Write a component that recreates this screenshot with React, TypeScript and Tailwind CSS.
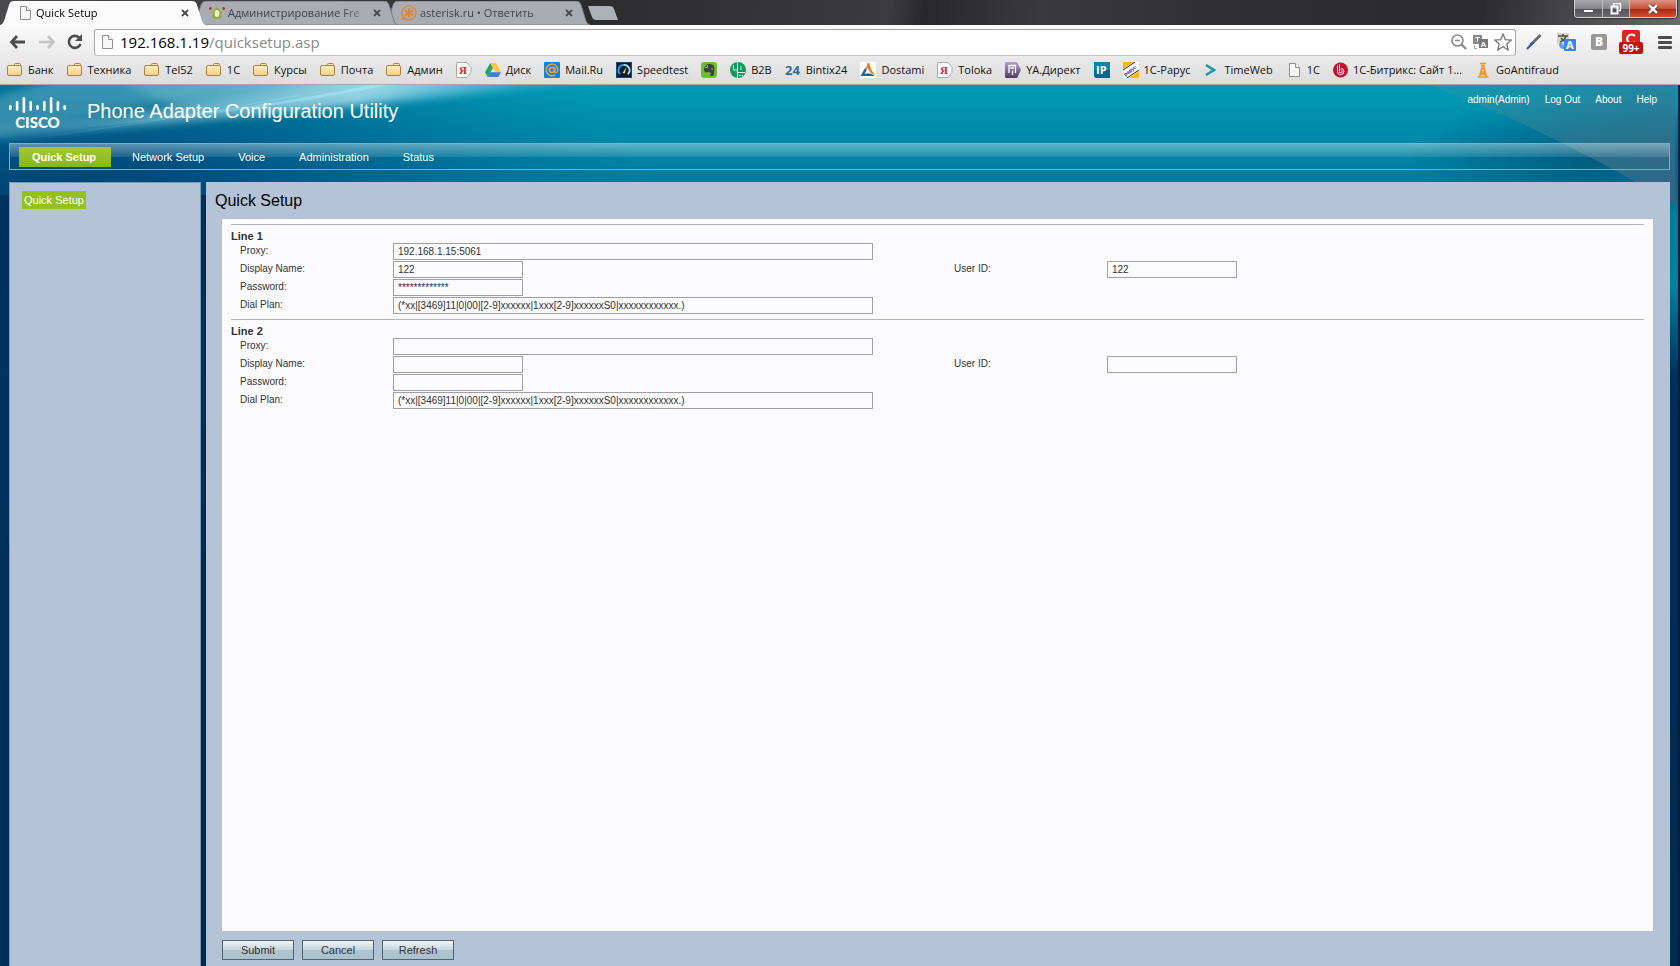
import type { ReactNode } from "react";

const FolderIcon = () => (
  <svg width="16" height="16" viewBox="0 0 16 16">
    <defs>
      <linearGradient id="folder" x1="0" y1="0" x2="0" y2="1">
        <stop offset="0" stopColor="#fff0c4" />
        <stop offset="1" stopColor="#f8cd80" />
      </linearGradient>
    </defs>
    <path d="M7.5 4V2.5q0-1 1-1h4q1 0 1 1V5z" fill="#fbe6b0" stroke="#a98147" />
    <rect x="0.5" y="3.5" width="14" height="10" rx="1.5" fill="url(#folder)" stroke="#a98147" />
  </svg>
);

const PageIcon = () => (
  <svg width="16" height="16" viewBox="0 0 16 16">
    <path d="M3.5 1.5h6l4 4v9h-10z" fill="#f6f6f6" stroke="#8e8e8e" />
    <path d="M9.5 1.5v4h4" fill="#fff" stroke="#8e8e8e" />
  </svg>
);

const YandexIcon = () => (
  <svg width="16" height="16" viewBox="0 0 16 16">
    <path d="M1 .5h10l4 5v5l-4 5H1q-.5 0-.5-.5V1q0-.5.5-.5z" fill="#fff" stroke="#a9a9a9" />
    <text x="3" y="12" fontSize="11" fontFamily="Liberation Serif" fontWeight="bold" fill="#d22">Я</text>
  </svg>
);

const DriveIcon = () => (
  <svg width="16" height="16" viewBox="0 0 16 16">
    <path d="M5.3 1 8 5.7 2.8 15 0 10.2z" fill="#23a566" />
    <path d="M5.3 1h5.4L16 10.2h-5.4z" fill="#fbc934" />
    <path d="M5.5 10.2H16L13.3 15H2.8z" fill="#3d7de8" />
  </svg>
);

const MailIcon = () => (
  <svg width="16" height="16" viewBox="0 0 16 16">
    <rect width="16" height="16" rx="1" fill="#1583d8" />
    <circle cx="8" cy="8" r="2.5" fill="none" stroke="#f5a623" strokeWidth="1.6" />
    <path d="M10.7 5.3v3.9c0 2 3.1 1.6 3.1-1.3A5.8 5.8 0 1 0 11 12.9" fill="none" stroke="#f5a623" strokeWidth="1.5" />
  </svg>
);

const SpeedtestIcon = () => (
  <svg width="16" height="16" viewBox="0 0 16 16">
    <rect x="0.5" y="0.5" width="15" height="15" fill="#0c1d33" stroke="#1e4670" />
    <path d="M4.2 12A5.3 5.3 0 0 1 8 2.8" fill="none" stroke="#25a7e0" strokeWidth="1.8" />
    <path d="M8 2.8A5.3 5.3 0 0 1 11.8 12" fill="none" stroke="#aee3f7" strokeWidth="1.8" />
    <path d="m6.5 11 4-6-1.8 6.6z" fill="#f4d25a" />
  </svg>
);

const EvernoteIcon = () => (
  <svg width="16" height="16" viewBox="0 0 16 16">
    <rect width="16" height="16" rx="3" fill="#6cc12e" />
    <path d="M3 5.5 6.3 2h3l3.2 1 1 4-.5 6-1.5 1H9.5l-.7-1.5 1.7-1L8 10l-3.5.5L3 8.5z" fill="#3c4440" />
    <path d="M3.8 5.6h2.7V3" fill="none" stroke="#8fd25c" />
    <path d="M10.3 7q1.5-.8 1.7.6" fill="none" stroke="#8fd25c" />
  </svg>
);

const B2BIcon = () => (
  <svg width="16" height="16" viewBox="0 0 16 16">
    <circle cx="8" cy="8" r="8" fill="#109a5b" />
    <path d="M7.5 0v16M3.5 3v5h4M7.5 10.5H15M11 4v4" fill="none" stroke="#e3f4ea" />
    <path d="M9 13.500h1.500M11.500 13.500H13" stroke="#e3f4ea" />
  </svg>
);

const Bintix24Icon = () => (
  <svg width="16" height="16" viewBox="0 0 16 16">
    <text x="0" y="13" fontSize="13" fontFamily="Open Sans" fontWeight="bold" fill="#2d6ea3">24</text>
  </svg>
);

const DostamiIcon = () => (
  <svg width="16" height="16" viewBox="0 0 16 16">
    <rect width="16" height="16" fill="#fff" />
    <path d="M4.5 7Q7 5 7.500 1h2q1 7 5.500 12-5-1-7-6.500z" fill="#f07c25" />
    <path d="M4.500 7 7 6.500Q6.500 9 4.500 12q5-2 10.500 2H.5z" fill="#1e63a8" />
  </svg>
);

const DirectIcon = () => (
  <svg width="16" height="16" viewBox="0 0 16 16">
    <defs>
      <linearGradient id="direct" x1="0" y1="0" x2="0" y2="1">
        <stop offset="0" stopColor="#b3a2cf" />
        <stop offset="1" stopColor="#4d3b6b" />
      </linearGradient>
    </defs>
    <path d="M0 1q0-1 1-1h11l4 8-4 8H1q-1 0-1-1z" fill="url(#direct)" />
    <path d="M4 11V3.500h6.500V11M5.500 6H9M7.500 8.500V13" fill="none" stroke="#fff" strokeWidth="1.3" />
  </svg>
);

const IpIcon = () => (
  <svg width="16" height="16" viewBox="0 0 16 16">
    <path d="M0 0h16v16H2l-2-2z" fill="#0a84ad" />
    <path d="M0 8h16v8H2l-2-2z" fill="#07658f" />
    <text x="2" y="12" fontSize="11" fontFamily="Open Sans" fontWeight="bold" fill="#fff">IP</text>
  </svg>
);

const ParusIcon = () => (
  <svg width="16" height="16" viewBox="0 0 16 16">
    <rect width="16" height="16" fill="#fff" />
    <path d="M0 0h11L0 7zM16 9v7H6z" fill="#fbb70d" />
    <path d="M0 8 12 0M4 16l12-8" stroke="#222" />
    <text transform="translate(8 10) rotate(-36)" textAnchor="middle" fontSize="5" fontFamily="Liberation Sans" fontWeight="bold" fill="#1c2fae">рарус</text>
  </svg>
);

const TimeWebIcon = () => (
  <svg width="16" height="16" viewBox="0 0 16 16">
    <path d="m2 3 8 5-8 5" fill="none" stroke="#119aa8" strokeWidth="2.5" />
  </svg>
);

const BitrixIcon = () => (
  <svg width="15" height="16" viewBox="0 0 15 16">
    <circle cx="7.5" cy="8" r="7.5" fill="#c8102e" />
    <path d="M4.5 3.5v6a3.2 3.2 0 1 0 3.2-3.2M6.500 2.500v7a1.300 1.300 0 1 0 1.300-1.300" fill="none" stroke="#fff" />
  </svg>
);

const TowerIcon = () => (
  <svg width="16" height="16" viewBox="0 0 16 16">
    <path d="M5 1.5h6M6 3.500h4M7.500 3 4.500 15M8.500 3l3 12M6.500 7h3M5.800 10h4.500M2.500 15h11M6 13l4-3M10 13 6 10" fill="none" stroke="#f0962c" strokeWidth="1.5" />
  </svg>
);

const FrogIcon = () => (
  <svg width="16" height="16" viewBox="0 0 16 16">
    <path d="M0 3.500h2.500M1.500 2v3M16 3.500h-2.500M14.500 2v3" fill="none" stroke="#a83228" strokeWidth="1.5" />
    <path d="M2 5q2 2.500 3.500 2V4L7 2.500h2L10.500 4v3q1.500.5 3.500-2l-2 4.500 1 3-2 1H5l-2-1 1-3z" fill="#8fae28" />
    <ellipse cx="8" cy="8.5" rx="2.300" ry="3.500" fill="#eef2dc" />
  </svg>
);

const AsteriskIcon = () => (
  <svg width="16" height="16" viewBox="0 0 16 16">
    <path d="M1 14.5 3 13A7 7 0 1 1 8 15q-2.500 0-4-1.500z" fill="none" stroke="#dd8433" strokeWidth="1.3" />
    <path d="M8 3.500v9M4 5.700l8 4.600M12 5.700l-8 4.600" stroke="#dd8433" strokeWidth="2" />
  </svg>
);

const CloseIcon = () => (
  <svg width="8" height="8" viewBox="0 0 8 8">
    <path d="m1 1 6 6M7 1 1 7" stroke="#4a4a4a" strokeWidth="1.8" />
  </svg>
);

const tabs = [
  { title: "Quick Setup", icon: <PageIcon />, active: true, box: "z-30 text-black" },
  { title: "Администрирование Fre", icon: <FrogIcon />, active: false, box: "-ml-[14px] z-20 text-[#3f434a]" },
  { title: "asterisk.ru • Ответить", icon: <AsteriskIcon />, active: false, box: "-ml-[14px] z-10 text-[#3f434a]" },
];

const TabStrip = () => (
  <div className="relative flex h-[25px] items-end overflow-hidden bg-[linear-gradient(100deg,#4a4a4d_0%,#2c2c30_35%,#3b3b3f_53%,#28282c_55%,#3a3a3e_62%,#2e2e31_75%,#2b2b2e_88%,#6a6a6a_100%)]">
    {tabs.map((tab) => (
      <div key={tab.title} className={"relative flex h-6 w-[206px] shrink-0 items-center pl-[17px] " + tab.box}>
        <svg className="absolute inset-0 h-full w-full" viewBox="0 0 206 24" preserveAspectRatio="none">
          <path
            d="M0 24q3-1 4-4L9 4q1-4 5-4h178q4 0 5 4l5 16q1 3 4 4z"
            fill={tab.active ? "#fbfbfb" : "#a9acb3"}
            stroke={tab.active ? "none" : "#7b7e85"}
          />
        </svg>
        <span className="relative">{tab.icon}</span>
        <span className="relative ml-[3px] w-[145px] whitespace-nowrap text-[11px] leading-4 [mask-image:linear-gradient(90deg,#000_80%,transparent)]">
          {tab.title}
        </span>
        <button className="relative" aria-label="Закрыть вкладку">
          <CloseIcon />
        </button>
      </div>
    ))}
    <button className="mb-[5px] -ml-[3px] h-[14px] w-[31px]" aria-label="Новая вкладка">
      <svg width="31" height="14" viewBox="0 0 31 14">
        <path d="M1 0h22q3 0 4 3l4 11H9q-3 0-4-3z" fill="#adb0b6" />
      </svg>
    </button>
    <div className="mr-[3px] ml-auto flex h-[18px] self-start overflow-hidden rounded-b-[4px] border border-t-0 border-[#d5d5d5] shadow-[0_0_1px_1px_#333]">
      <button aria-label="Свернуть" className="flex w-7 items-center justify-center border-r border-[#bbb] bg-[linear-gradient(#a8a8aa,#858588_50%,#505054_51%,#6a6a6e)]">
        <span className="mt-1 h-[4px] w-[11px] border border-[#555] bg-white" />
      </button>
      <button aria-label="Развернуть" className="flex w-[27px] items-center justify-center border-r border-[#bbb] bg-[linear-gradient(#a8a8aa,#858588_50%,#505054_51%,#6a6a6e)]">
        <svg width="12" height="12" viewBox="0 0 12 12" fill="none" stroke="#fff">
          <path d="M3.5 2.500v-2h7v7h-2" strokeWidth="1.3" />
          <rect x="1.5" y="3.5" width="6" height="7" strokeWidth="2" />
        </svg>
      </button>
      <button aria-label="Закрыть" className="flex w-[46px] items-center justify-center bg-[linear-gradient(#dc9483,#c8513a_50%,#a92711_51%,#c9502f)]">
        <svg width="12" height="10" viewBox="0 0 12 10">
          <path d="m2 1 8 8M10 1 2 9" stroke="#5d1c12" strokeWidth="4" />
          <path d="m2 1 8 8M10 1 2 9" stroke="#fff" strokeWidth="2.5" />
        </svg>
      </button>
    </div>
  </div>
);

const Toolbar = () => (
  <div className="flex h-[34px] items-center pr-2 pl-[9px]">
    <button aria-label="Назад">
      <svg width="18" height="16" viewBox="0 0 18 16" fill="none" stroke="#4d4d4d" strokeWidth="2.8">
        <path d="M2 8h14M8 2 2.500 8 8 14" />
      </svg>
    </button>
    <button aria-label="Вперёд" className="ml-3">
      <svg width="18" height="16" viewBox="0 0 18 16" fill="none" stroke="#c3c3c3" strokeWidth="2.6">
        <path d="M0 8h14M9 2l5.500 6L9 14" />
      </svg>
    </button>
    <button aria-label="Обновить" className="ml-[10px]">
      <svg width="16" height="16" viewBox="0 0 16 16">
        <path d="M13.5 10A6 6 0 1 1 12 3.500" fill="none" stroke="#4d4d4d" strokeWidth="2.6" />
        <path d="M15 0v7H8z" fill="#4d4d4d" />
      </svg>
    </button>
    <div className="ml-[11px] flex h-[27px] flex-1 items-center rounded-[3px] border border-[#a6a6a6] border-b-[#c4c4c4] bg-white pr-[3px] pl-1">
      <PageIcon />
      <div className="ml-[5px] flex-1 text-[15px] leading-5 text-[#8a8a8a]">
        <span className="text-black">192.168.1.19</span>/quicksetup.asp
      </div>
      <svg width="16" height="16" viewBox="0 0 16 16" fill="none" stroke="#8a8a8a">
        <circle cx="6.5" cy="6.5" r="5.5" strokeWidth="1.6" />
        <path d="M4 6.5h5" strokeWidth="1.6" />
        <path d="m10.5 10.5 4.5 4.5" strokeWidth="2.4" />
      </svg>
      <svg className="ml-[6px]" width="16" height="16" viewBox="0 0 16 16">
        <rect x="0" y="1" width="9" height="9" fill="#8a8a8a" />
        <path d="M2 3.500h5M4.500 3.500v4" stroke="#fff" />
        <rect x="6" y="5" width="9" height="9" fill="#777" />
        <text x="7.5" y="13" fontSize="8" fontFamily="Liberation Sans" fontWeight="bold" fill="#fff">A</text>
        <path d="M1.5 11.500v3h3" fill="none" stroke="#777" strokeDasharray="2 1" />
      </svg>
      <svg className="ml-[5px]" width="18" height="18" viewBox="0 0 18 18">
        <path d="m9 1 2.3 5.6 6 .5-4.500 4 1.400 5.900L9 13.800 3.800 17l1.400-5.900-4.500-4 6-.5z" fill="#fff" stroke="#777" strokeWidth="1.3" />
      </svg>
    </div>
    <button aria-label="Перо" className="ml-[10px]">
      <svg width="16" height="16" viewBox="0 0 16 16">
        <path d="M1 14q3-5 6-4-1 4-6 4z" fill="#b4cdfb" />
        <path d="M14.5 1 5 10.500" stroke="#666" strokeWidth="2.6" />
        <path d="M7 8.500 1 15" stroke="#2b55c9" strokeWidth="2" />
      </svg>
    </button>
    <button aria-label="Перевести" className="ml-[15px]">
      <svg width="20" height="20" viewBox="0 0 20 20">
        <rect x="0" y="1" width="12" height="11" fill="#d8d5c4" />
        <path d="M1 4h10M6 2v2M9 4q-1 4-6 6M4 6q2 3 6 4" fill="none" stroke="#4c4c46" strokeWidth="1.5" />
        <rect x="7" y="7" width="12" height="12" rx="1" fill="#3b82ee" />
        <path d="M2 12q0 5 5 5v-3l-3-4z" fill="#5c97f0" />
        <text x="9" y="17" fontSize="11" fontFamily="Open Sans" fontWeight="bold" fill="#fff">A</text>
      </svg>
    </button>
    <button aria-label="B" className="ml-[14px] flex size-4 items-center justify-center rounded-[2px] bg-[#989898] text-[12px] font-extrabold text-white">
      <span aria-hidden="true">B</span>
    </button>
    <button aria-label="Уведомления: 99+" className="relative ml-3 flex h-6 w-6 justify-center">
      <svg width="18" height="18" viewBox="0 0 18 18">
        <rect width="18" height="18" rx="2" fill="#d8281d" />
        <path d="M13 6A4.500 4.500 0 1 0 13 12" fill="none" stroke="#fff" strokeWidth="2.2" />
      </svg>
      <span className="absolute inset-x-0 bottom-0 h-3 rounded-[2px] bg-[#c4100e] text-center text-[10px] leading-3 font-bold text-white">99+</span>
    </button>
    <button aria-label="Меню" className="ml-[15px] flex w-[14px] flex-col gap-[2px]">
      <span className="h-[3px] w-full rounded-[1px] bg-[#4d4d4d]" />
      <span className="h-[3px] w-full rounded-[1px] bg-[#4d4d4d]" />
      <span className="h-[3px] w-full rounded-[1px] bg-[#4d4d4d]" />
    </button>
  </div>
);

const bookmarks: { icon: ReactNode; title?: string; name?: string }[] = [
  { icon: <FolderIcon />, title: "Банк" },
  { icon: <FolderIcon />, title: "Техника" },
  { icon: <FolderIcon />, title: "Tel52" },
  { icon: <FolderIcon />, title: "1C" },
  { icon: <FolderIcon />, title: "Курсы" },
  { icon: <FolderIcon />, title: "Почта" },
  { icon: <FolderIcon />, title: "Админ" },
  { icon: <YandexIcon />, name: "Яндекс" },
  { icon: <DriveIcon />, title: "Диск" },
  { icon: <MailIcon />, title: "Mail.Ru" },
  { icon: <SpeedtestIcon />, title: "Speedtest" },
  { icon: <EvernoteIcon />, name: "Evernote" },
  { icon: <B2BIcon />, title: "B2B" },
  { icon: <Bintix24Icon />, title: "Bintix24" },
  { icon: <DostamiIcon />, title: "Dostami" },
  { icon: <YandexIcon />, title: "Toloka" },
  { icon: <DirectIcon />, title: "YA.Директ" },
  { icon: <IpIcon />, name: "IP" },
  { icon: <ParusIcon />, title: "1С-Рарус" },
  { icon: <TimeWebIcon />, title: "TimeWeb" },
  { icon: <PageIcon />, title: "1C" },
  { icon: <BitrixIcon />, title: "1С-Битрикс: Сайт 1..." },
  { icon: <TowerIcon />, title: "GoAntifraud" },
];

const BookmarksBar = () => (
  <nav className="flex h-[26px] items-center gap-[13px] overflow-hidden border-b border-[#a5a9a9] pb-[3px] pl-[7px] text-[11px] leading-4 whitespace-nowrap text-[#111]">
    {bookmarks.map((b, i) => (
      <a key={i} href="#" aria-label={b.title ? undefined : b.name} className="flex shrink-0 items-center gap-[5px]">
        {b.icon}
        {b.title && <span>{b.title}</span>}
      </a>
    ))}
  </nav>
);

// Light rays across the banner, fading to navy down both page edges
const Backdrop = () => (
  <svg className="absolute inset-0 h-full w-full" viewBox="0 0 1680 881" preserveAspectRatio="none" aria-hidden="true">
    <defs>
      <linearGradient id="sea" x1="0" y1="0" x2="0" y2="1">
        <stop offset="0" stopColor="#009ab6" />
        <stop offset="0.08" stopColor="#0083a4" />
        <stop offset="0.12" stopColor="#007a9c" />
        <stop offset="0.23" stopColor="#007f9f" />
        <stop offset="0.33" stopColor="#002f58" />
        <stop offset="1" stopColor="#002a52" />
      </linearGradient>
      <radialGradient id="deep" gradientUnits="userSpaceOnUse" cx="60" cy="240" r="620" gradientTransform="translate(0 60) scale(1 0.5)">
        <stop offset="0" stopColor="#002f5a" />
        <stop offset="0.35" stopColor="#00487a" stopOpacity="0.9" />
        <stop offset="1" stopColor="#006b99" stopOpacity="0" />
      </radialGradient>
      <linearGradient id="ray" x1="0" y1="0" x2="1" y2="0">
        <stop offset="0" stopColor="#4fa5bd" stopOpacity="0.6" />
        <stop offset="0.55" stopColor="#9ad6e6" stopOpacity="0.95" />
        <stop offset="1" stopColor="#3cb4d2" stopOpacity="0" />
      </linearGradient>
      <linearGradient id="streak" x1="0" y1="0" x2="1" y2="0">
        <stop offset="0" stopColor="#8fd6ea" stopOpacity="0" />
        <stop offset="1" stopColor="#a5e4f5" stopOpacity="0.9" />
      </linearGradient>
      <linearGradient id="dusk" x1="0" y1="0" x2="1" y2="1">
        <stop offset="0" stopColor="#2f9aa9" stopOpacity="0.4" />
        <stop offset="1" stopColor="#3a5f80" stopOpacity="0.95" />
      </linearGradient>
      <radialGradient id="shade" cx="0.6" cy="0.5" r="0.5">
        <stop offset="0" stopColor="#00557a" stopOpacity="0.85" />
        <stop offset="1" stopColor="#00557a" stopOpacity="0" />
      </radialGradient>
      <filter id="soft"><feGaussianBlur stdDeviation="4" /></filter>
    </defs>
    <rect width="1680" height="881" fill="url(#sea)" />
    <rect width="700" height="881" fill="url(#deep)" />
    <rect y="110" width="9" height="771" fill="#002f5a" opacity="0.8" />
    <rect x="201" y="110" width="5" height="771" fill="#00294f" opacity="0.8" />
    <g filter="url(#soft)">
      <path d="M-10 46Q180 24 380-10h280Q330 24-10 54z" fill="url(#ray)" />
      <path d="M100-12h500Q330 14 170 20z" fill="url(#ray)" />
      <path d="M-10 50 300-8H60L-10 14z" fill="#5fb0c4" opacity="0.55" />
    </g>
    <path d="M90 42Q270 25 387 0h-16Q250 25 90 40z" fill="url(#streak)" />
    <path d="M-10 58Q150 40 300 10" fill="none" stroke="url(#streak)" opacity="0.4" />
    <ellipse cx="1560" cy="75" rx="190" ry="65" fill="url(#shade)" />
    <path d="M1430 0h245v120Q1560 50 1430 0z" fill="url(#dusk)" />
    <rect x="1678" width="2" height="881" fill="#021f3c" />
  </svg>
);

// Heights of the nine bars of the logo, left to right
const bars = [5, 10, 16, 10, 5, 10, 16, 10, 5];

const CiscoLogo = () => (
  <a href="#" className="mt-[2px] flex w-[57px] flex-col items-center text-white">
    <svg width="57" height="18" viewBox="0 0 57 18" aria-hidden="true">
      {bars.map((h, i) => (
        <rect key={i} x={i * 6.8} y={h === 5 ? 8 : h === 10 ? 4 : 0} width="2.6" height={h} rx="1.3" fill="#fff" />
      ))}
    </svg>
    <span className="font-['Lato',sans-serif] text-[15px] leading-[14px] font-black">CISCO</span>
  </a>
);

const menu = ["Voice", "Administration", "Status"];

const Field = ({ id, label, value, width }: { id: string; label: string; value: string; width: string }) => (
  <>
    <label htmlFor={id} className="pl-[9px] leading-4">{label}</label>
    <input
      id={id}
      type="text"
      defaultValue={value}
      className={"ml-[9px] h-[17px] border border-[#a0a0a3] bg-[#fbfbfe] px-1 text-[10px] leading-[15px] outline-none " + width}
    />
  </>
);

const Line = ({ n, proxy, user, password }: { n: number; proxy: string; user: string; password: string }) => (
  <fieldset className="h-[95px] border-t border-[#b6b2cd] pt-[5px]">
    <h2 className="text-[11px] leading-[13px] font-bold">Line {n}</h2>
    <div className="grid auto-rows-[18px] grid-cols-[153px_561px_153px_1fr] text-[10px]">
      <Field id={`proxy${n}`} label="Proxy:" value={proxy} width="w-[480px]" />
      <div className="col-span-2" />
      <Field id={`name${n}`} label="Display Name:" value={user} width="w-[130px]" />
      <Field id={`user${n}`} label="User ID:" value={user} width="w-[130px]" />
      <Field id={`password${n}`} label="Password:" value={password} width="w-[130px]" />
      <div className="col-span-2" />
      <Field id={`plan${n}`} label="Dial Plan:" value="(*xx|[3469]11|0|00|[2-9]xxxxxx|1xxx[2-9]xxxxxxS0|xxxxxxxxxxxx.)" width="w-[480px]" />
    </div>
  </fieldset>
);

export default function App() {
  return (
    <div className="flex min-h-screen flex-col font-['Open_Sans','Noto_Sans',sans-serif]">
      <TabStrip />
      <div className="bg-gradient-to-b from-[#fbfbfb] to-[#dcdcdc]">
        <Toolbar />
        <BookmarksBar />
      </div>
      <div className="relative flex flex-1 flex-col overflow-hidden bg-[#002a52] font-['Liberation_Sans',sans-serif]">
        <Backdrop />
        <div className="relative flex flex-1 flex-col pr-[10px] pl-[9px]">
          <header className="flex h-[58px] items-start pt-[10px] text-white">
            <CiscoLogo />
            <h1 className="mt-1 ml-[21px] text-[20px] leading-6">Phone Adapter Configuration Utility</h1>
            <div className="mr-[13px] ml-auto flex gap-[15px] text-[10px] leading-[10px]">
              <span>admin(Admin)</span>
              <a href="#">Log Out</a>
              <a href="#">About</a>
              <a href="#">Help</a>
            </div>
          </header>
          <nav className="flex h-[27px] items-center gap-[34px] border border-[#6fb5c8] bg-[linear-gradient(rgba(255,255,255,0.36)_0%,rgba(255,255,255,0.12)_50%,transparent_51%)] pl-[9px] text-[11px] leading-5 text-white">
            <div className="flex gap-[21px]">
              <a href="#" className="w-[92px] bg-gradient-to-b from-[#a3c636] to-[#86b817] pr-[2px] text-center font-bold">Quick Setup</a>
              <a href="#">Network Setup</a>
            </div>
            {menu.map((m) => (
              <a key={m} href="#">{m}</a>
            ))}
          </nav>
          <div className="mt-3 flex flex-1 gap-[5px]">
            <aside className="w-48 border border-b-0 border-[#7c9bb2] bg-[#b4c3d6] pt-2 pl-3">
              <a href="#" className="block w-fit bg-[#95c11f] px-[2px] text-[11px] leading-[18px] text-white">Quick Setup</a>
            </aside>
            <main className="flex flex-1 flex-col bg-[#b4c3d6] pr-[17px] pb-[6px] pl-4 text-[#333]">
              <h2 className="-ml-[7px] h-[37px] pt-[9px] text-[16px] leading-5 text-black">Quick Setup</h2>
              <form className="flex flex-1 flex-col" onSubmit={(e) => e.preventDefault()}>
                <div className="flex-1 bg-[#fbfbfe] px-[9px] pt-[5px]">
                  <Line n={1} proxy="192.168.1.15:5061" user="122" password="*************" />
                  <Line n={2} proxy="" user="" password="" />
                </div>
                <div className="mt-[9px] flex gap-2 text-[11px]">
                  {["Submit", "Cancel", "Refresh"].map((t) => (
                    <button key={t} className="h-5 w-[72px] border border-[#52656f] bg-[linear-gradient(#eef3f6,#c6d5de_50%,#b0c5d0_51%,#a9c2cd)] leading-4">{t}</button>
                  ))}
                </div>
              </form>
            </main>
          </div>
        </div>
      </div>
    </div>
  );
}
